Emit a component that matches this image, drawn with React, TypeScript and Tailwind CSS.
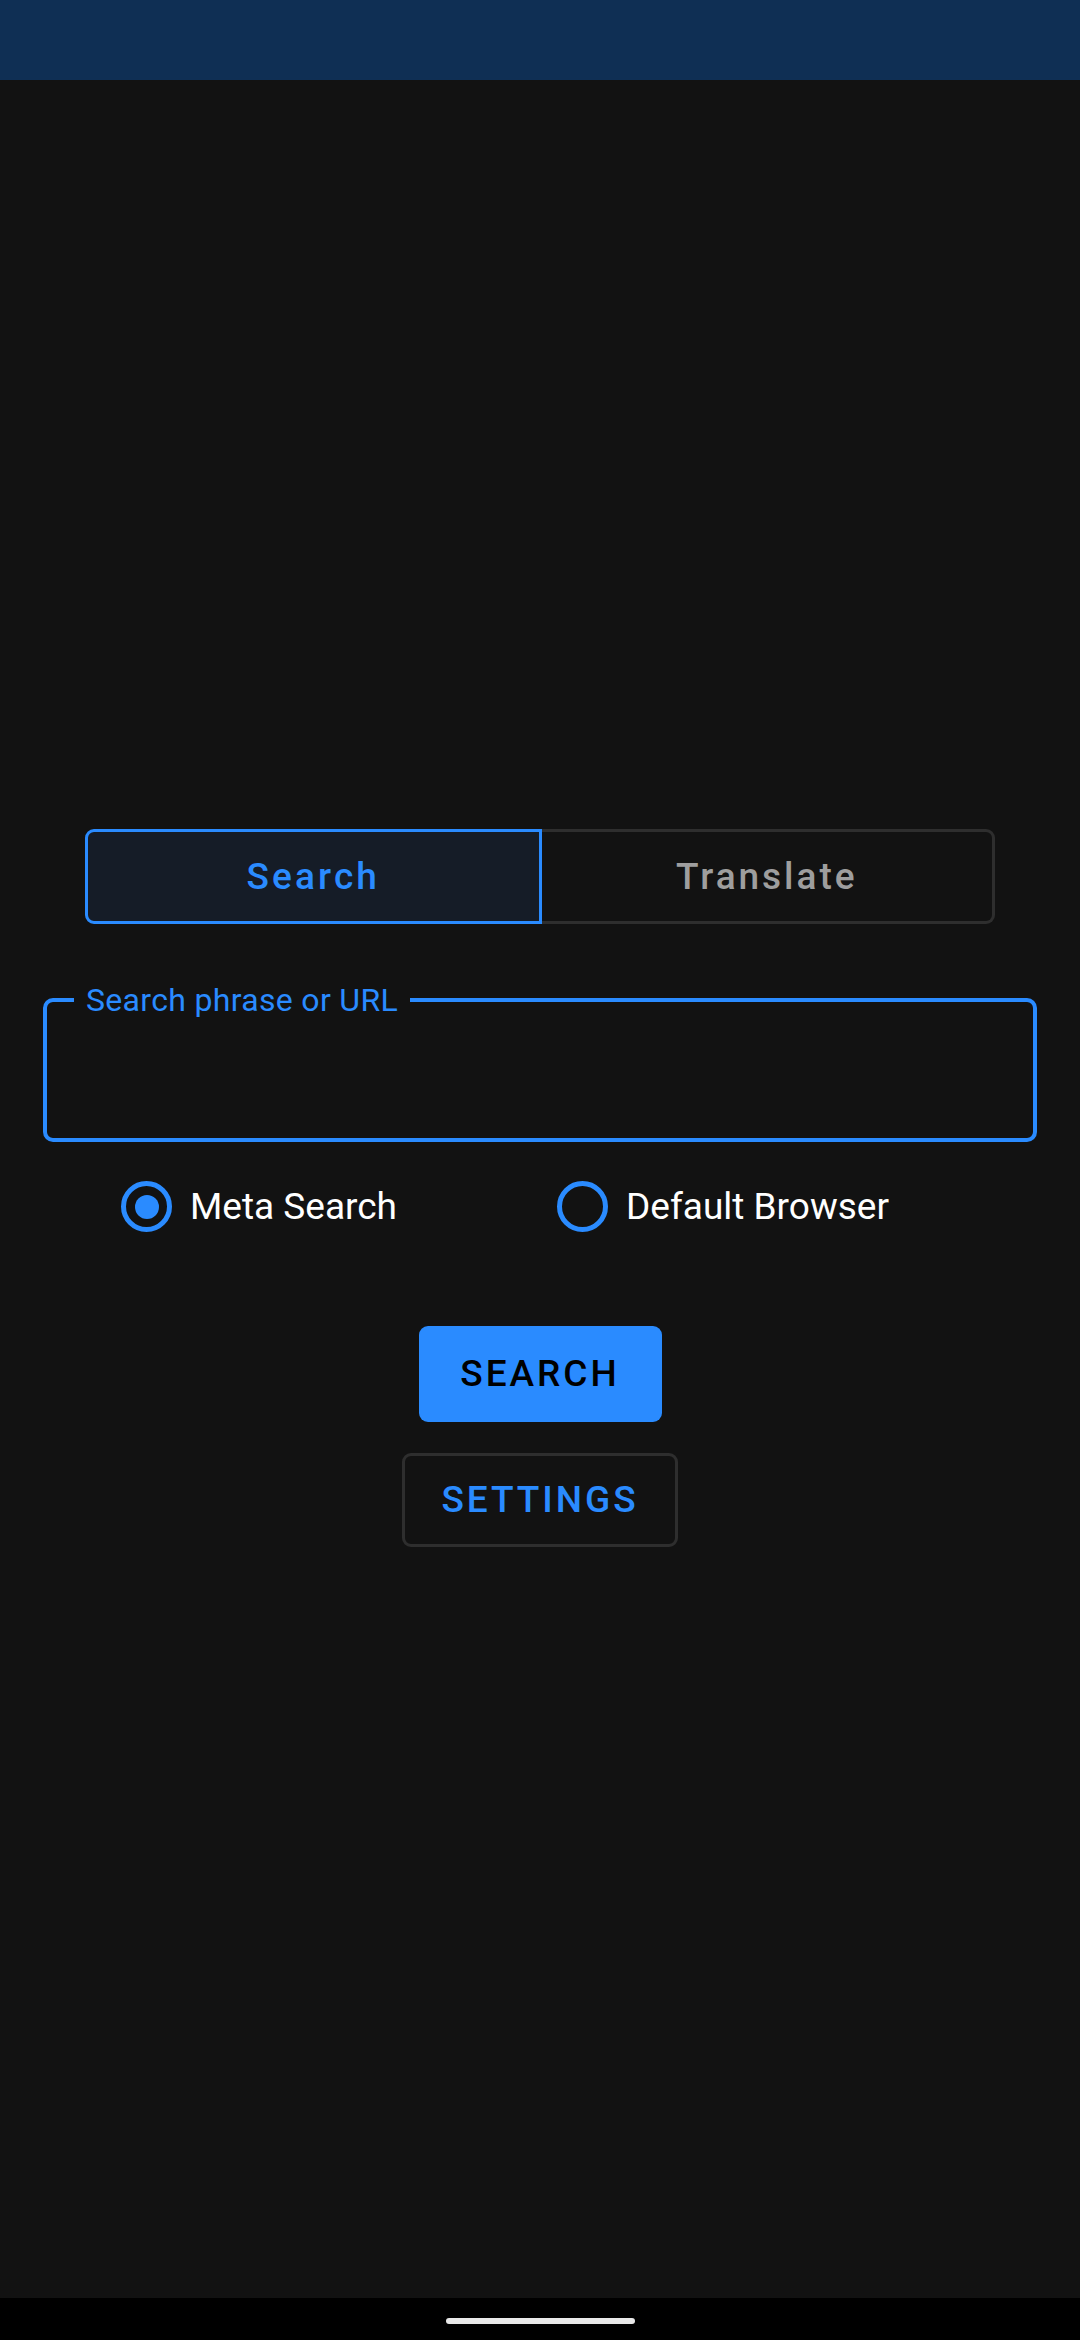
import { useState } from "react";

function Radio({ checked, label, className }: { checked: boolean; label: string; className?: string }) {
    return (
        <div className={"flex items-center " + (className ?? "")}>
            <div className="w-[51px] h-[51px] rounded-full border-[5px] border-[#2a8bff] flex items-center justify-center">
                {checked ? <div className="w-[24px] h-[24px] rounded-full bg-[#2a8bff]" /> : null}
            </div>
            <span className="ml-[18px] text-[37px] text-white leading-none">{label}</span>
        </div>
    );
}

export default function App() {
    const [tab, setTab] = useState<"search" | "translate">("search");
    const [target, setTarget] = useState<"meta" | "browser">("meta");

    return (
        <div className="w-[1080px] h-[2340px] flex flex-col bg-[#121212]" style={{ fontFamily: "Roboto, 'Noto Sans', sans-serif" }}>
            {/* status bar */}
            <div className="h-[80px] bg-[#0f2f54]" />

            <div className="flex-1 flex flex-col items-center pt-[749px]">
                {/* tabs */}
                <div className="flex w-[910px] h-[95px]">
                    <button
                        onClick={() => setTab("search")}
                        className="flex-1 flex items-center justify-center border-[3px] border-[#2a8bff] rounded-l-[9px] bg-[#151c27] text-[#2a8bff] text-[37px] font-medium tracking-[0.085em]"
                    >
                        Search
                    </button>
                    <button
                        onClick={() => setTab("translate")}
                        className="flex-1 flex items-center justify-center border-[3px] border-l-0 border-[#2e2e2e] rounded-r-[9px] text-[#9e9e9e] text-[37px] font-medium tracking-[0.08em]"
                    >
                        Translate
                    </button>
                </div>

                {/* input */}
                <div className="relative w-[994px] h-[144px] mt-[74px] border-[4px] border-[#2a8bff] rounded-[10px]">
                    <span className="absolute left-[27px] top-[-22px] px-[12px] bg-[#121212] text-[#2a8bff] text-[32px] leading-[40px] tracking-[0.01em]">
                        Search phrase or URL
                    </span>
                </div>

                {/* radios */}
                <div className="w-[1080px] flex mt-[39px] pl-[121px]">
                    <div onClick={() => setTarget("meta")} className="w-[436px]">
                        <Radio checked={target === "meta"} label="Meta Search" />
                    </div>
                    <div onClick={() => setTarget("browser")}>
                        <Radio checked={target === "browser"} label="Default Browser" />
                    </div>
                </div>

                {/* buttons */}
                <button className="mt-[94px] w-[243px] h-[96px] rounded-[9px] bg-[#2a8bff] text-black text-[37px] font-medium tracking-[0.08em]">
                    SEARCH
                </button>
                <button className="mt-[31px] w-[276px] h-[94px] rounded-[9px] border-[3px] border-[#2e2e2e] text-[#2a8bff] text-[37px] font-medium tracking-[0.08em]">
                    SETTINGS
                </button>
            </div>

            {/* nav bar */}
            <div className="h-[42px] bg-black flex justify-center pt-[20px]">
                <div className="w-[189px] h-[6px] rounded-full bg-[#e8e8e8]" />
            </div>
        </div>
    );
}
